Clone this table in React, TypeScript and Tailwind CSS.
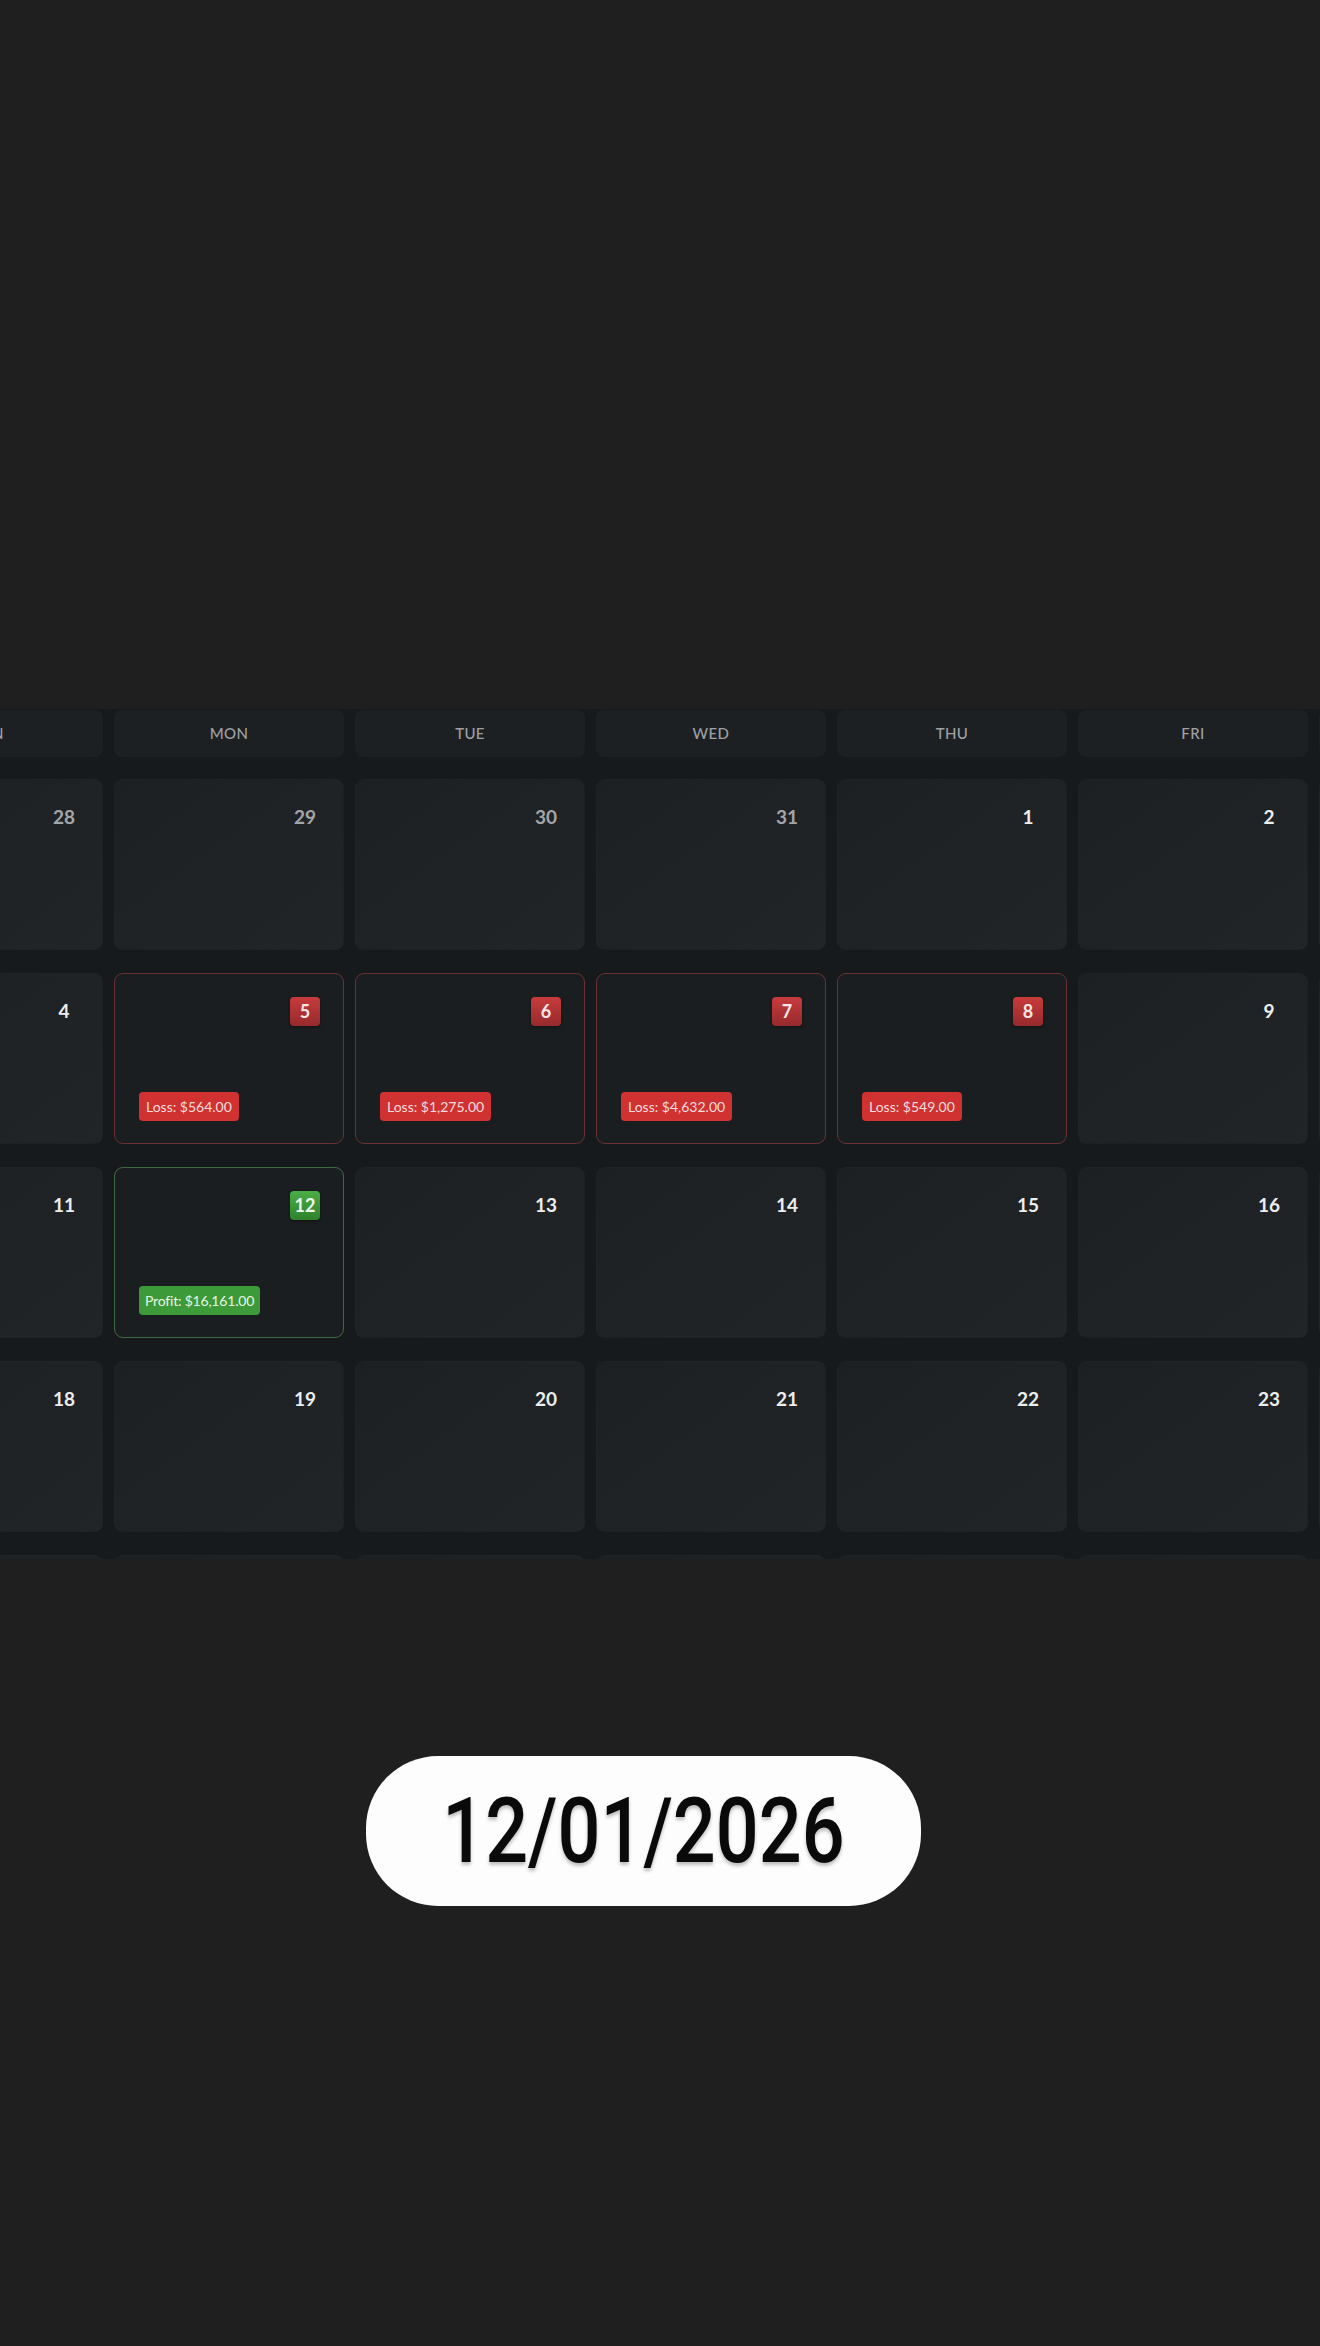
import React from "react";

type Day = {
  n: number;
  muted?: boolean;
  loss?: string;
  profit?: string;
};

const headers = ["SUN", "MON", "TUE", "WED", "THU", "FRI", "SAT"];

const rows: Day[][] = [
  [
    { n: 28, muted: true },
    { n: 29, muted: true },
    { n: 30, muted: true },
    { n: 31, muted: true },
    { n: 1 },
    { n: 2 },
    { n: 3 },
  ],
  [
    { n: 4 },
    { n: 5, loss: "Loss: $564.00" },
    { n: 6, loss: "Loss: $1,275.00" },
    { n: 7, loss: "Loss: $4,632.00" },
    { n: 8, loss: "Loss: $549.00" },
    { n: 9 },
    { n: 10 },
  ],
  [
    { n: 11 },
    { n: 12, profit: "Profit: $16,161.00" },
    { n: 13 },
    { n: 14 },
    { n: 15 },
    { n: 16 },
    { n: 17 },
  ],
  [
    { n: 18 },
    { n: 19 },
    { n: 20 },
    { n: 21 },
    { n: 22 },
    { n: 23 },
    { n: 24 },
  ],
  [
    { n: 25 },
    { n: 26 },
    { n: 27 },
    { n: 28 },
    { n: 29 },
    { n: 30 },
    { n: 31 },
  ],
];

function Cell({ d }: { d: Day }) {
  const isLoss = !!d.loss;
  const isProfit = !!d.profit;
  const border = isLoss
    ? "border border-[#6a3033]"
    : isProfit
    ? "border border-[#3e6a40]"
    : "border border-transparent";
  const bg =
    isLoss || isProfit
      ? "bg-[#1b1e20]"
      : "bg-gradient-to-br from-[#1d2022] to-[#222528]";
  return (
    <div
      className={`h-[171px] rounded-[9px] ${border} ${bg} flex flex-col pt-[23px] pr-[23px] pl-[24px] pb-[22px]`}
    >
      <div className="flex justify-end">
        {isLoss ? (
          <div className="w-[30px] h-[29px] rounded-[4px] bg-gradient-to-b from-[#c93b3c] to-[#962a2c] shadow-[0_1px_3px_rgba(0,0,0,0.5)] flex items-center justify-center text-[18px] font-bold text-[#f4e6e6]">
            {d.n}
          </div>
        ) : isProfit ? (
          <div className="w-[30px] h-[29px] rounded-[4px] bg-gradient-to-b from-[#4aae45] to-[#2e832d] shadow-[0_1px_3px_rgba(0,0,0,0.5)] flex items-center justify-center text-[18px] font-bold text-[#eef8ec]">
            {d.n}
          </div>
        ) : (
          <div
            className={`w-[30px] h-[28px] flex items-center justify-center text-[19px] font-bold ${
              d.muted ? "text-[#a3a6a9]" : "text-[#eceded]"
            }`}
          >
            {d.n}
          </div>
        )}
      </div>
      <div className="mt-auto flex">
        {isLoss && (
          <div className="h-[29px] px-[7px] rounded-[4px] bg-[#d03131] flex items-center text-[14px] text-[#f6dede]">
            {d.loss}
          </div>
        )}
        {isProfit && (
          <div className="h-[29px] px-[6px] rounded-[4px] bg-[#3d9a38] flex items-center text-[14px] tracking-[-0.2px] text-[#e7f5e4]">
            {d.profit}
          </div>
        )}
      </div>
    </div>
  );
}

export default function App() {
  return (
    <div className="w-[1320px] h-[2346px] bg-[#201f1f] overflow-hidden flex flex-col font-['Lato',sans-serif]">
      <div className="h-[709px] shrink-0" />
      <div className="h-[850px] shrink-0 bg-[#171a1c] overflow-hidden">
        <div className="ml-[-127px] w-[1676px]">
          <div className="mt-[1px] grid grid-cols-[repeat(7,230px)] gap-x-[11px]">
            {headers.map((h) => (
              <div
                key={h}
                className="h-[47px] rounded-[8px] bg-[#1d2022] flex items-center justify-center text-[15px] font-medium tracking-wide text-[#9da1a5]"
              >
                {h}
              </div>
            ))}
          </div>
          <div className="mt-[22px] grid grid-cols-[repeat(7,230px)] gap-x-[11px] gap-y-[23px]">
            {rows.flat().map((d, i) => (
              <Cell key={i} d={d} />
            ))}
          </div>
        </div>
      </div>
      <div className="mt-[197px] ml-[366px] w-[555px] h-[150px] rounded-[72px] bg-[#fdfdfd] flex items-center justify-center">
        <span className="inline-block scale-x-[0.83] font-['Roboto',sans-serif] font-medium text-[91px] leading-none text-[#0a0a0a] [text-shadow:0_3px_4px_rgba(0,0,0,0.25)]">
          12/01/2026
        </span>
      </div>
    </div>
  );
}
